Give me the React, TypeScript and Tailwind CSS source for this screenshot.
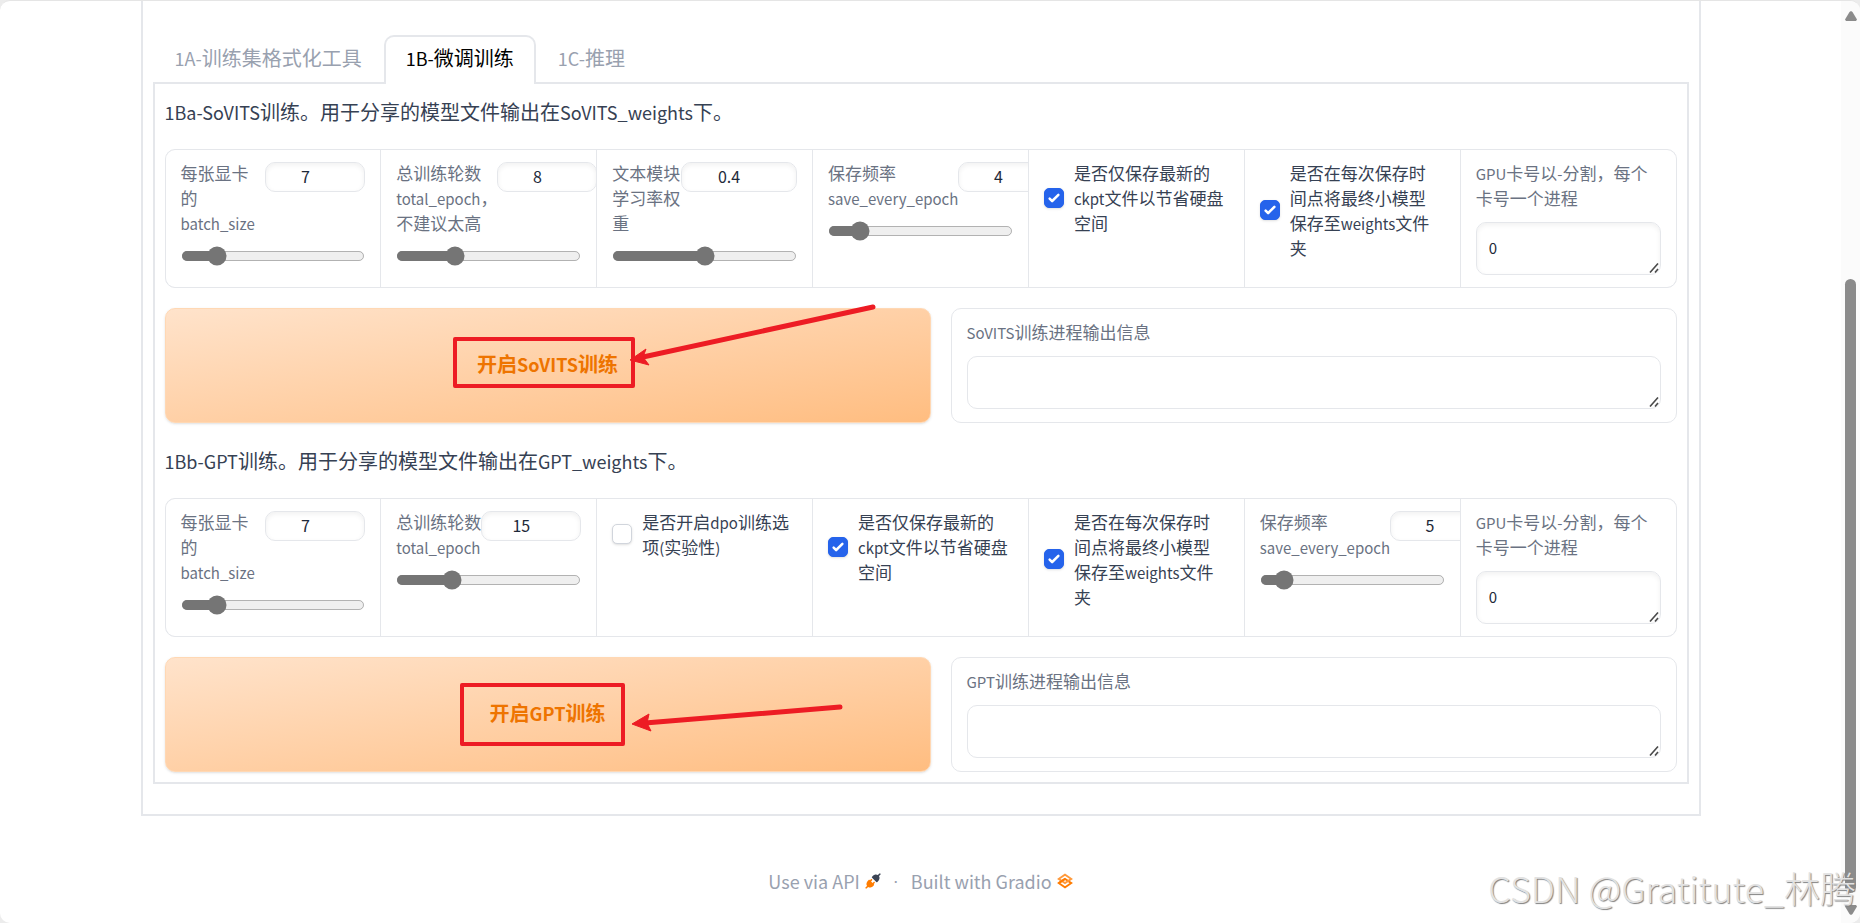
import React from 'react';

type Field =
  | { kind: 'slider'; id: string; lines: string[]; value: number; min: number; max: number; step?: number; wide?: boolean }
  | { kind: 'check'; id: string; label: string; checked: boolean }
  | { kind: 'text'; id: string; label: string; value: string };

const sovitsFields: Field[] = [
  { kind: 'slider', id: 's-batch', lines: ['每张显卡', '的', 'batch_size'], value: 7, min: 1, max: 40 },
  { kind: 'slider', id: 's-epoch', lines: ['总训练轮数', 'total_epoch，', '不建议太高'], value: 8, min: 1, max: 25 },
  { kind: 'slider', id: 's-lr', lines: ['文本模块', '学习率权', '重'], value: 0.4, min: 0.2, max: 0.6, step: 0.05, wide: true },
  { kind: 'slider', id: 's-save', lines: ['保存频率', 'save_every_epoch'], value: 4, min: 1, max: 25 },
  { kind: 'check', id: 's-latest', label: '是否仅保存最新的ckpt文件以节省硬盘空间', checked: true },
  { kind: 'check', id: 's-weights', label: '是否在每次保存时间点将最终小模型保存至weights文件夹', checked: true },
  { kind: 'text', id: 's-gpu', label: 'GPU卡号以-分割，每个卡号一个进程', value: '0' },
];

const gptFields: Field[] = [
  { kind: 'slider', id: 'g-batch', lines: ['每张显卡', '的', 'batch_size'], value: 7, min: 1, max: 40 },
  { kind: 'slider', id: 'g-epoch', lines: ['总训练轮数', 'total_epoch'], value: 15, min: 2, max: 50 },
  { kind: 'check', id: 'g-dpo', label: '是否开启dpo训练选项(实验性)', checked: false },
  { kind: 'check', id: 'g-latest', label: '是否仅保存最新的ckpt文件以节省硬盘空间', checked: true },
  { kind: 'check', id: 'g-weights', label: '是否在每次保存时间点将最终小模型保存至weights文件夹', checked: true },
  { kind: 'slider', id: 'g-save', lines: ['保存频率', 'save_every_epoch'], value: 5, min: 1, max: 50 },
  { kind: 'text', id: 'g-gpu', label: 'GPU卡号以-分割，每个卡号一个进程', value: '0' },
];

const inputStyle = 'border border-gray-200 rounded-[10px] bg-white text-gray-800 shadow-[inset_0_2px_5px_0_rgba(0,0,0,0.06)] outline-none';

// latin letters are set a little smaller than the chinese ones around them
function Mixed({ text, large }: { text: string; large?: boolean }) {
  return (
    <>
      {text.split(/([\x20-\x7e]+)/).map((part, i) =>
        i % 2 ? <span key={i} className={large ? 'text-[18px] leading-none' : 'text-[15px] leading-none'}>{part}</span> : part
      )}
    </>
  );
}

function SliderField({ field }: { field: Extract<Field, { kind: 'slider' }> }) {
  return (
    <div>
      <div className="flex justify-between">
        <label htmlFor={field.id} className="shrink-0 text-gray-500">
          {field.lines.map((line) => (
            <span key={line} className="block h-[25px] whitespace-nowrap"><Mixed text={line} /></span>
          ))}
        </label>
        <input
          type="text"
          aria-label={field.lines.join('')}
          defaultValue={field.value}
          className={`${inputStyle} ${field.wide ? 'w-[116px]' : 'w-[100px]'} h-[30px] mt-[2px] shrink-0 pl-2 pr-7 pb-[3px] text-center text-[16px]`}
        />
      </div>
      <input
        id={field.id}
        type="range"
        min={field.min}
        max={field.max}
        step={field.step ?? 1}
        defaultValue={field.value}
        className="block w-full mt-[9px] px-px accent-[#757575] [zoom:1.25]"
      />
    </div>
  );
}

function CheckField({ field }: { field: Extract<Field, { kind: 'check' }> }) {
  return (
    <label htmlFor={field.id} className="flex items-center gap-[10px] text-gray-700">
      <span className="relative flex shrink-0">
        <input
          id={field.id}
          type="checkbox"
          defaultChecked={field.checked}
          className="peer appearance-none w-5 h-5 rounded-[5px] border border-gray-300 bg-white shadow-sm checked:bg-[#2563eb] checked:border-[#2563eb]"
        />
        <svg viewBox="0 0 16 16" className="absolute inset-0 w-5 h-5 fill-white opacity-0 peer-checked:opacity-100 pointer-events-none">
          <path d="M12.207 4.793a1 1 0 010 1.414l-5 5a1 1 0 01-1.414 0l-2-2a1 1 0 011.414-1.414L6.5 9.086l4.293-4.293a1 1 0 011.414 0z" />
        </svg>
      </span>
      <span className="max-w-[152px]"><Mixed text={field.label} /></span>
    </label>
  );
}

function TextArea({ id, value, className }: { id: string; value?: string; className: string }) {
  return (
    <div className="relative">
      <textarea id={id} defaultValue={value} className={`${className} block w-full h-[53px] px-3 py-3 text-[15px] resize-none overflow-hidden`} />
      <svg viewBox="0 0 10 10" className="absolute right-[2px] bottom-[2px] w-[10px] h-[10px] pointer-events-none" stroke="#4b4b4b" strokeWidth="1.6" fill="none">
        <path d="M1 9.5L9 0.5M6 9.5L9 6" />
      </svg>
    </div>
  );
}

function TextField({ id, label, value }: { id: string; label: string; value: string }) {
  return (
    <div>
      <label htmlFor={id} className="block mb-3 text-gray-500"><Mixed text={label} /></label>
      <TextArea id={id} value={value} className={inputStyle} />
    </div>
  );
}

function FieldRow({ fields }: { fields: Field[] }) {
  return (
    <div className="grid grid-cols-7 gap-px border border-gray-200 rounded-[10px] overflow-hidden bg-gray-200 text-[17px] leading-[25px]">
      {fields.map((field) => (
        <div key={field.id} className="min-w-0 overflow-hidden bg-white px-[15px] pt-[10px] pb-3">
          {field.kind === 'slider' && <SliderField field={field} />}
          {field.kind === 'check' && <CheckField field={field} />}
          {field.kind === 'text' && <TextField id={field.id} label={field.label} value={field.value} />}
        </div>
      ))}
    </div>
  );
}

function TrainRow({ id, action, output, children }: { id: string; action: string; output: string; children: React.ReactNode }) {
  return (
    <div className="grid grid-cols-[766fr_726fr] gap-5">
      <div className="relative flex">
        <button
          type="button"
          className="w-full pb-1 rounded-[10px] border border-[#ffd8b4] bg-gradient-to-br from-[#ffe3cb] to-[#ffbd80] text-[20px] font-semibold text-[#ee7400] shadow-sm"
        >
          <Mixed text={action} large />
        </button>
        {/* hand drawn marker, centred on the button */}
        <svg viewBox="0 0 766 115" className="absolute inset-0 z-10 w-full h-full overflow-visible pointer-events-none" fill="none" stroke="#ed1c24" strokeWidth="4" strokeLinejoin="round">
          {children}
        </svg>
      </div>
      <div className="border border-gray-200 rounded-[10px] bg-white px-[15px] pt-[10px] pb-[13px] text-[17px] leading-[25px]">
        <label htmlFor={id} className="block mb-3 text-gray-500"><Mixed text={output} /></label>
        <TextArea id={id} className="border border-gray-200 rounded-[10px] outline-none" />
      </div>
    </div>
  );
}

function ApiLogo() {
  return (
    <svg viewBox="0 0 28 28" className="w-4 h-4">
      <path fill="#3c4555" d="M26.9425 2.94265C27.4632 2.42195 27.4632 1.57773 26.9425 1.05703C26.4218 0.536329 25.5776 0.536329 25.0569 1.05703L22.5713 3.54256C21.1213 2.59333 19.5367 2.43378 18.1753 2.64006C16.5495 2.88638 15.1127 3.66838 14.3905 4.39053L12.3905 6.39053C12.1405 6.64058 12 6.97972 12 7.33334C12 7.68697 12.1405 8.0261 12.3905 8.27615L19.7239 15.6095C20.2446 16.1302 21.0888 16.1302 21.6095 15.6095L23.6095 13.6095C24.3316 12.8873 25.1136 11.4505 25.36 9.82475C25.5663 8.46312 25.4066 6.87827 24.4571 5.42807L26.9425 2.94265Z" />
      <path fill="#ff7c00" d="M12.276 12.9426C12.7967 12.4219 12.7967 11.5777 12.276 11.057C11.7553 10.5363 10.9111 10.5363 10.3904 11.057L8.6651 12.7821L8.27615 12.3905C8.0261 12.1405 7.68697 12 7.33334 12C6.97972 12 6.64058 12.1405 6.39053 12.3905L4.39053 14.3905C3.66838 15.1127 2.88638 16.5495 2.64006 18.1753C2.43377 19.5367 2.59333 21.1213 3.54262 22.5714L1.05703 25.057C0.536329 25.5777 0.536329 26.4219 1.05703 26.9426C1.57773 27.4633 2.42195 27.4633 2.94265 26.9426L5.42817 24.4571C6.87835 25.4066 8.46315 25.5663 9.82475 25.36C11.4505 25.1136 12.8873 24.3316 13.6095 23.6095L15.6095 21.6095C16.1302 21.0888 16.1302 20.2446 15.6095 19.7239L15.2188 19.3332L16.9426 17.6093C17.4633 17.0886 17.4633 16.2444 16.9426 15.7237C16.4219 15.203 15.5777 15.203 15.057 15.7237L13.3332 17.4475L10.5521 14.6665L12.276 12.9426Z" />
    </svg>
  );
}

function GradioLogo() {
  return (
    <svg viewBox="30 70 515 435" className="w-4 h-4" fill="none" strokeWidth="54" preserveAspectRatio="none">
      <path stroke="#ff7c00" d="M287.5 229L86 344.5L287.5 460L489 344.5L287.5 229Z" />
      <path stroke="#ff9a3c" d="M287.5 116L86 231.5L287.5 347L489 231.5L287.5 116Z" />
      <path stroke="#ff7c00" d="M86 344L288 229" />
    </svg>
  );
}

export default function App() {
  return (
    <div className="min-h-screen bg-[#ececec] font-['Noto_Sans_CJK_SC',sans-serif]">
      <div className="relative flex min-h-screen border-t border-[#e5e5e5] rounded-[10px] overflow-hidden bg-white">
        <main className="flex-1 min-w-0">
          <div className="max-w-[1560px] mx-auto border-x-2 border-b-2 border-gray-200 px-[10px] pt-[34px] pb-[30px]">
            <div role="tablist" className="flex items-start -mb-[2px] text-[20px] leading-[30px] text-gray-400">
              <button type="button" role="tab" className="px-5 pt-[6px] border-2 border-b-0 border-transparent"><Mixed text="1A-训练集格式化工具" large /></button>
              <button type="button" role="tab" aria-selected="true" className="px-5 pt-[6px] pb-[11px] border-2 border-b-0 border-gray-200 rounded-t-[10px] bg-white text-black"><Mixed text="1B-微调训练" large /></button>
              <button type="button" role="tab" className="px-5 pt-[6px] border-2 border-b-0 border-transparent"><Mixed text="1C-推理" large /></button>
            </div>
            <section className="flex flex-col gap-5 border-2 border-gray-200 p-[10px]">
              <p className="text-[20px] leading-[35px] text-gray-700"><Mixed text="1Ba-SoVITS训练。用于分享的模型文件输出在SoVITS_weights下。" large /></p>
              <FieldRow fields={sovitsFields} />
              <TrainRow id="s-out" action="开启SoVITS训练" output="SoVITS训练进程输出信息">
                <rect x="290" y="31" width="178" height="47" />
                <path d="M708 -1L478 49" strokeWidth="5" strokeLinecap="round" />
                <path d="M465 52L481 41L478 49L484 57Z" fill="#ed1c24" strokeWidth="1" />
              </TrainRow>
              <p className="text-[20px] leading-[35px] text-gray-700"><Mixed text="1Bb-GPT训练。用于分享的模型文件输出在GPT_weights下。" large /></p>
              <FieldRow fields={gptFields} />
              <TrainRow id="g-out" action="开启GPT训练" output="GPT训练进程输出信息">
                <rect x="297" y="28" width="161" height="59" />
                <path d="M675 50L480 66" strokeWidth="5" strokeLinecap="round" />
                <path d="M467 67L484 57L482 66L486 74Z" fill="#ed1c24" strokeWidth="1" />
              </TrainRow>
            </section>
          </div>
          <footer className="flex items-center justify-center gap-3 mt-[50px] text-[18px] leading-[30px] text-gray-400">
            <a href="#api" className="flex items-center gap-[5px]">Use via API <ApiLogo /></a>
            <span className="font-['Liberation_Sans',sans-serif]">·</span>
            <a href="#gradio" className="flex items-center gap-[5px]">Built with Gradio <GradioLogo /></a>
          </footer>
        </main>
        <div aria-hidden="true" className="flex flex-col items-center w-[19px] bg-[#fbfbfb] pt-[10px] pb-2">
          <svg viewBox="0 0 12 10" className="w-3 h-[10px] fill-[#8b8b8b]"><path d="M6 0L7.5 1L12 8.5L11 10H1L0 8.5L4.5 1Z" /></svg>
          <div className="flex-1 flex items-end pb-3 pt-[258px]"><div className="w-[11px] h-full rounded-full bg-[#8b8b8b]" /></div>
          <svg viewBox="0 0 12 10" className="w-3 h-[10px] fill-[#8b8b8b]"><path d="M6 10L7.5 9L12 1.5L11 0H1L0 1.5L4.5 9Z" /></svg>
        </div>
        <div className="absolute right-1 bottom-[15px] text-[36px] leading-[42px] font-light whitespace-nowrap text-[#e2e2e2] [text-shadow:1px_1px_1px_#808080]">CSDN @Gratitute_林腾</div>
      </div>
    </div>
  );
}
